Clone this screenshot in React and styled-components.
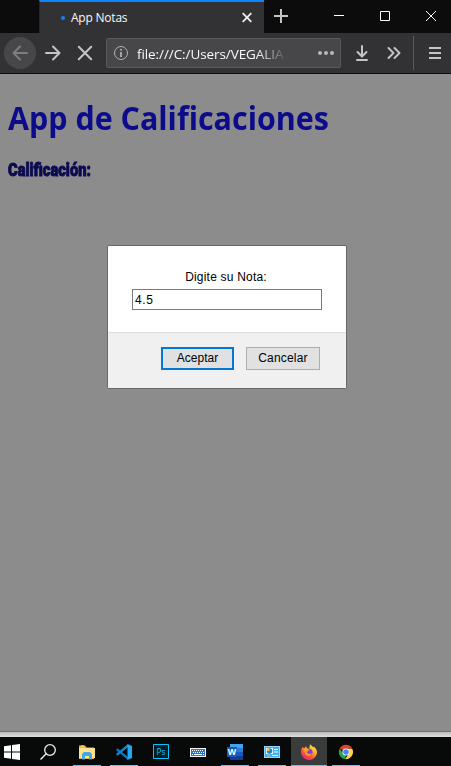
import React from "react";
import styled, { createGlobalStyle } from "styled-components";

const GlobalStyle = createGlobalStyle`
  * { box-sizing: border-box; }
  html, body { margin: 0; padding: 0; overflow: hidden; background: #0c0c0d; }
`;

const ui = `"Open Sans", "Noto Sans", sans-serif`;

const Screen = styled.div`
  width: 451px;
  height: 766px;
  display: flex;
  flex-direction: column;
  overflow: hidden;
`;

const TabStrip = styled.div`
  height: 33px;
  flex: none;
  display: flex;
  background: #0c0c0c;
  padding-left: 39px;
`;

const Tab = styled.div`
  width: 225px;
  height: 33px;
  flex: none;
  display: flex;
  align-items: center;
  background: #323234;
  border-top: 2px solid #0a84ff;
  border-left: 1px solid #252527;
  padding: 0 11px 0 21px;
`;

const LoadingDot = styled.span`
  width: 4px;
  height: 4px;
  margin-right: 6px;
  border-radius: 50%;
  background: #0a84ff;
`;

const TabTitle = styled.span`
  flex: 1;
  font: 12px/16px ${ui};
  letter-spacing: -0.22px;
  color: #f9f9fa;
  white-space: nowrap;
`;

const NewTab = styled.div`
  width: 34px;
  height: 32px;
  flex: none;
  display: flex;
  align-items: center;
  justify-content: center;
`;

const WindowControls = styled.div`
  display: flex;
  flex: none;
  margin-left: 18px;
`;

const WindowButton = styled.div`
  width: 46px;
  height: 32px;
  flex: none;
  display: flex;
  align-items: center;
  justify-content: center;
`;

const Toolbar = styled.div`
  height: 41px;
  flex: none;
  display: flex;
  align-items: center;
  background: #323234;
  border-bottom: 1px solid #0c0c0d;
  padding-left: 4px;
`;

const BackButton = styled.div`
  width: 32px;
  height: 32px;
  display: flex;
  align-items: center;
  justify-content: center;
  border-radius: 50%;
  background: #474749;
`;

const ToolButton = styled.div`
  width: 32px;
  height: 32px;
  margin-left: ${(p) => p.$gap || 0}px;
  display: flex;
  align-items: center;
  justify-content: center;
`;

const AddressBar = styled.div`
  width: 235px;
  height: 30px;
  margin-left: 5px;
  display: flex;
  align-items: center;
  padding: 0 5px 0 6px;
  background: #474749;
  border: 1px solid #5a5a5c;
  border-radius: 2px;
`;

const Address = styled.span`
  width: 148px;
  margin-left: 8px;
  padding-top: 1px;
  overflow: hidden;
  white-space: nowrap;
  font: 13.5px/22px ${ui};
  letter-spacing: -0.08px;
  color: #f9f9fa;
  mask-image: linear-gradient(to right, #000 119px, transparent 151px);
`;

const Ellipsis = styled.div`
  display: flex;
  gap: 2px;
  margin-left: auto;
  margin-right: 1px;
`;

const EllipsisDot = styled.span`
  width: 4px;
  height: 4px;
  border-radius: 50%;
  background: #b9b9ba;
`;

const Divider = styled.div`
  width: 1px;
  height: 34px;
  margin-left: 3px;
  background: #5b5b5d;
`;

const Page = styled.main`
  position: relative;
  height: 657px;
  flex: none;
  padding: 22px 8px 0;
  background: #8c8c8c;
`;

const Heading = styled.h1`
  width: max-content;
  margin: 0;
  font: 700 32px/43px ${ui};
  color: #0b0b8c;
  transform: scaleX(${(p) => p.$fit});
  transform-origin: left;
`;

const Label = styled.div`
  width: max-content;
  margin-top: 19px;
  font: 900 18px/24px Roboto, sans-serif;
  color: #0b0b50;
  -webkit-text-stroke: 0.9px #0b0b50;
  transform: scaleX(${(p) => p.$fit});
  transform-origin: left;
`;

const Dialog = styled.div`
  position: absolute;
  left: 107px;
  top: 171px;
  width: 240px;
  height: 144px;
  display: flex;
  flex-direction: column;
  border: 1px solid #686868;
  border-radius: 2px;
  background: #fff;
  font: 12px/15px "Liberation Sans", Arial, sans-serif;
  letter-spacing: 0.2px;
  color: #000;
  overflow: hidden;
`;

const DialogBody = styled.div`
  height: 86px;
  display: flex;
  flex-direction: column;
  padding: 24px 26px 0 24px;
`;

const Prompt = styled.label`
  text-align: center;
`;

const Field = styled.div`
  width: 190px;
  height: 21px;
  margin-top: 4px;
  padding: 3px 2px;
  border: 1px solid #7a7a7a;
  letter-spacing: 0.6px;
`;

const DialogFooter = styled.div`
  flex: 1;
  display: flex;
  justify-content: flex-end;
  align-items: flex-start;
  gap: 12px;
  padding: 14px 26px 0 0;
  background: #f0f0f0;
  border-top: 1px solid #dfdfdf;
`;

const Button = styled.button`
  width: ${(p) => (p.$primary ? 73 : 74)}px;
  height: 23px;
  padding: 0 0 1px;
  border: ${(p) => (p.$primary ? "2px solid #0078d7" : "1px solid #adadad")};
  background: #e1e1e1;
  font: inherit;
  letter-spacing: ${(p) => (p.$primary ? 0.05 : 0.2)}px;
  color: #000;
`;

const WindowEdge = styled.div`
  height: 6px;
  flex: none;
  border-top: 1px solid #2483d1;
  background: linear-gradient(#bcbcbc, #dedede);
`;

const Taskbar = styled.div`
  height: 29px;
  flex: none;
  display: flex;
  gap: 9px;
  background: #080909;
`;

const Task = styled.div`
  width: ${(p) => (p.$active ? 36 : p.$start ? 24 : 28)}px;
  height: 29px;
  display: flex;
  justify-content: center;
  padding-top: 7px;
  margin: ${(p) => (p.$active ? "0 -4px" : p.$search ? "0 2px 0 1px" : "0")};
  background: ${(p) => (p.$active ? "#3a3c3c" : "transparent")};
  border-bottom: 1px solid ${(p) => (p.$open || p.$active ? "#76b9ed" : "transparent")};
`;

const Glyph = styled.svg`
  display: block;
  flex: none;
  fill: none;
  overflow: visible;
`;

const Icon = ({ size = 16, children }) => (
  <Glyph width={size} height={size} viewBox={`0 0 ${size} ${size}`}>
    {children}
  </Glyph>
);

const FileExplorerIcon = () => (
  <Icon>
    <path d="M0 1.5h6l1.5 2H15V15H0z" fill="#e9b83f" />
    <path d="M0 4h16v10H0z" fill="#ffe18a" />
    <path d="M2 1.5h3v1H2z" fill="#fff0b1" />
    <path d="M3 15.5V10l2-2h6l2 2v5.5h-3V12H6v3.5z" fill="#43a8e3" />
  </Icon>
);

const CodeIcon = () => (
  <Icon>
    <path d="M1.5 4.2 12 13v3L0 6z" fill="#0879bf" />
    <path d="M1.5 11.8 12 3V0L0 10z" fill="#0b8bd4" />
    <path d="M11.5 0 16 2v12l-4.5 2z" fill="#23a9f2" />
  </Icon>
);

const PsText = styled.text`
  font: 9px ${ui};
  fill: #00c8ff;
`;

const WordText = styled.text`
  font: 700 9px ${ui};
  fill: #fff;
`;

const WordIcon = () => (
  <Icon>
    <path d="M3 0h13v4H3z" fill="#41a5ee" />
    <path d="M3 4h13v4H3z" fill="#2b7cd3" />
    <path d="M3 8h13v4H3z" fill="#185abd" />
    <path d="M3 12h13v4H3z" fill="#103f91" />
    <path d="M0 3h10v10H0z" fill="#185abd" />
    <WordText x="0.8" y="11" textLength="8.4" lengthAdjust="spacingAndGlyphs">W</WordText>
  </Icon>
);

const KeyboardIcon = () => (
  <Icon>
    <path d="M0 4h16v9H0z" fill="#eef7ff" />
    <path d="M1 5h14v7H1z" fill="#2878c7" />
    <path d="M2 6.5h12M3 8.5h11" stroke="#fff" strokeDasharray="1 1" />
    <path d="M2 10.5h1M4 10.5h8M13 10.5h1" stroke="#fff" />
  </Icon>
);

const PanelIcon = () => (
  <Icon>
    <path d="M0 2h16v12H0z" fill="#8bd6fb" />
    <path d="M1 3h14v10H1z" fill="#43aee8" />
    <path d="M2 4h7v6H2z" fill="#e8f6ff" />
    <circle cx="5.5" cy="7" r="2.7" fill="#1682cc" />
    <path d="M5.5 7V4.3A2.7 2.7 0 0 0 2.8 7z" fill="#ffc13b" />
    <path d="M10 5.5h4M10 8h4" stroke="#fff" />
    <path d="M3 11.5h3" stroke="#f6a623" strokeWidth="2" />
    <path d="M8 11.5h6" stroke="#e8f6ff" />
  </Icon>
);

const FirefoxIcon = () => (
  <Icon>
    <defs>
      <linearGradient id="flame" x1="0.85" y1="0" x2="0.2" y2="1">
        <stop offset="0" stopColor="#fff44f" />
        <stop offset="0.35" stopColor="#ffb02e" />
        <stop offset="0.65" stopColor="#ff5a36" />
        <stop offset="1" stopColor="#e31587" />
      </linearGradient>
    </defs>
    <path d="M1.5 3 3.2 4.3 5 2.2 6 4.2 8.2 4.7 9 0.2 12 3 13 2.8C15 4.5 16 6.4 16 8.5A8 7.5 0 0 1 0 8.5C0 6 .7 4.3 1.5 3z" fill="url(#flame)" />
    <circle cx="8" cy="8.3" r="3.5" fill="#7542e5" />
    <path d="M3 5.2C5 4.4 6.5 5 8.5 5.6 8 7 6.4 7 6 8.2 6.4 10.2 9 10.5 11 9.3 9.7 13 4.8 12.5 3.8 9z" fill="#ff9a2f" />
  </Icon>
);

const ChromeIcon = () => (
  <Icon>
    <path d="M8 8 1.8 4.4A7.1 7.1 0 0 1 14.2 4.4L8 4.8z" fill="#e34133" />
    <path d="M1.8 4.4 5.2 9.6 8 11.2 7.2 15.1A7.1 7.1 0 0 1 1.8 4.4z" fill="#27a552" />
    <path d="M14.2 4.8A7.1 7.1 0 0 1 7.2 15.1L10.8 9.6 8 4.8z" fill="#ffd13d" />
    <circle cx="8" cy="8" r="3.6" fill="#fff" />
    <circle cx="8" cy="8" r="2.8" fill="#4285f4" />
  </Icon>
);

export default function App() {
  return (
    <Screen>
      <GlobalStyle />
      <TabStrip>
        <Tab>
          <LoadingDot />
          <TabTitle>App Notas</TabTitle>
          <Icon size={12}>
            <path d="m1.7 1.2 8.6 8.6m0-8.6-8.6 8.6" stroke="#f0f0f1" strokeWidth="1.8" />
          </Icon>
        </Tab>
        <NewTab>
          <Icon size={14}>
            <path d="M7 0v14M0 7h14" stroke="#c4c4c5" strokeWidth="2" />
          </Icon>
        </NewTab>
        <WindowControls>
          <WindowButton>
            <Icon size={10}><path d="M0 4.5h10" stroke="#fff" /></Icon>
          </WindowButton>
          <WindowButton>
            <Icon size={10}><path d="M.5.5h9v9h-9z" stroke="#fff" /></Icon>
          </WindowButton>
          <WindowButton>
            <Icon size={10}><path d="m0 0 10 10M10 0 0 10" stroke="#fff" /></Icon>
          </WindowButton>
        </WindowControls>
      </TabStrip>

      <Toolbar>
        <BackButton>
          <Icon>
            <path d="M15 8H1.5M8 1.5 1.5 8 8 14.5" stroke="#7d7d7e" strokeWidth="2" strokeLinecap="round" strokeLinejoin="round" />
          </Icon>
        </BackButton>
        <ToolButton $gap={1}>
          <Icon>
            <path d="M1 8h13.5M8 1.5 14.5 8 8 14.5" stroke="#c4c4c5" strokeWidth="2" strokeLinecap="round" strokeLinejoin="round" />
          </Icon>
        </ToolButton>
        <ToolButton>
          <Icon>
            <path d="m1.8 1.8 12.4 12.4m0-12.4L1.8 14.2" stroke="#c4c4c5" strokeWidth="2" strokeLinecap="round" />
          </Icon>
        </ToolButton>
        <AddressBar>
          <Icon>
            <circle cx="8" cy="8" r="6.5" stroke="#b1b1b3" />
            <path d="M8 7v5" stroke="#b1b1b3" strokeWidth="1.8" />
            <circle cx="8" cy="4.8" r="1" fill="#b1b1b3" />
          </Icon>
          <Address>file:///C:/Users/VEGALIA</Address>
          <Ellipsis>
            <EllipsisDot />
            <EllipsisDot />
            <EllipsisDot />
          </Ellipsis>
        </AddressBar>
        <ToolButton $gap={5}>
          <Icon>
            <path d="M8 1v10M3.5 7 8 11.5 12.5 7M3 15h10" stroke="#c4c4c5" strokeWidth="2" strokeLinecap="round" strokeLinejoin="round" />
          </Icon>
        </ToolButton>
        <ToolButton>
          <Icon>
            <path d="m2.5 3 5 5-5 5m6-10 5 5-5 5" stroke="#c4c4c5" strokeWidth="2" strokeLinecap="round" strokeLinejoin="round" />
          </Icon>
        </ToolButton>
        <Divider />
        <ToolButton $gap={5}>
          <Icon>
            <path d="M2 3h12M2 8h12M2 13h12" stroke="#c4c4c5" strokeWidth="2" />
          </Icon>
        </ToolButton>
      </Toolbar>

      <Page>
        <Heading $fit={0.951}>App de Calificaciones</Heading>
        <Label $fit={0.815}>Calificación:</Label>
        <Dialog role="dialog">
          <DialogBody>
            <Prompt>Digite su Nota:</Prompt>
            <Field>4.5</Field>
          </DialogBody>
          <DialogFooter>
            <Button $primary>Aceptar</Button>
            <Button>Cancelar</Button>
          </DialogFooter>
        </Dialog>
      </Page>
      <WindowEdge />

      <Taskbar>
        <Task $start>
          <Icon>
            <path d="M0 2.2 7 1.2v6.3H0zM8 1l8-1v7.5H8zM0 8.5h7v6.3l-7-1zM8 8.5h8V16l-8-1z" fill="#fff" />
          </Icon>
        </Task>
        <Task $search>
          <Icon>
            <circle cx="10" cy="6" r="5.3" stroke="#eee" strokeWidth="1.3" />
            <path d="M6.2 9.8.5 15.5" stroke="#eee" strokeWidth="1.4" />
          </Icon>
        </Task>
        <Task $open><FileExplorerIcon /></Task>
        <Task $open><CodeIcon /></Task>
        <Task>
          <Icon>
            <path d="M.5.5h15v14h-15z" fill="#001d26" stroke="#00c8ff" />
            <PsText x="3.5" y="11" textLength="9" lengthAdjust="spacingAndGlyphs">Ps</PsText>
          </Icon>
        </Task>
        <Task><KeyboardIcon /></Task>
        <Task $open><WordIcon /></Task>
        <Task $open><PanelIcon /></Task>
        <Task $active><FirefoxIcon /></Task>
        <Task $open><ChromeIcon /></Task>
      </Taskbar>
    </Screen>
  );
}
